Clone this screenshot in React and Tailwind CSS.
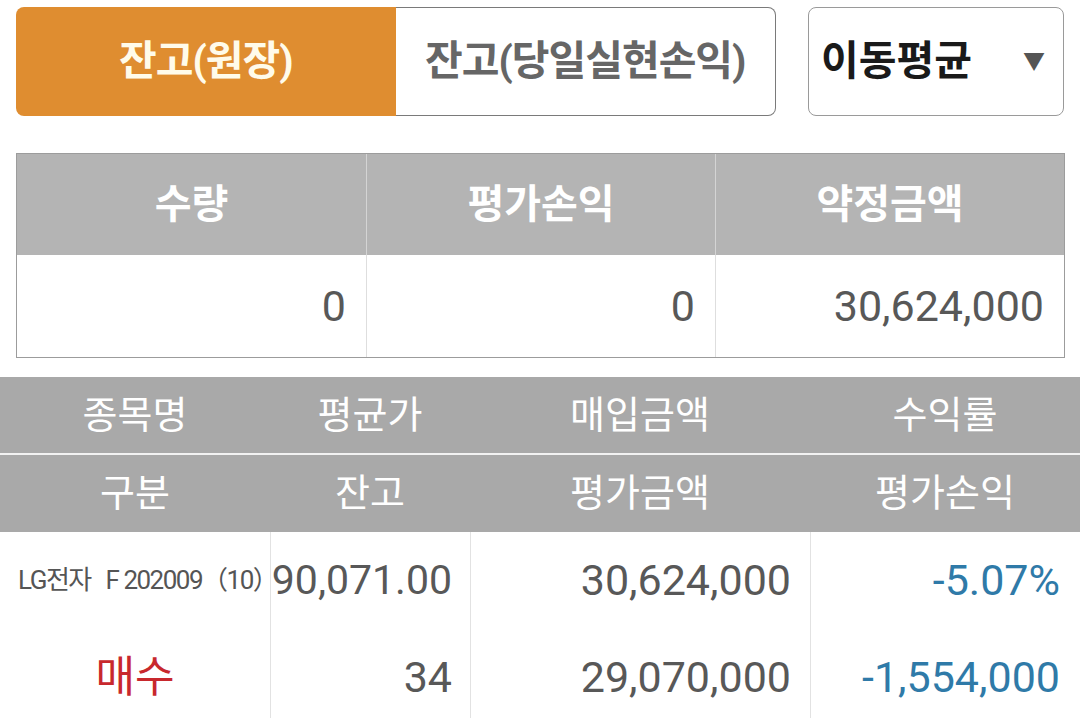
import React from 'react';

const font = { fontFamily: "Roboto, 'Noto Sans CJK KR', sans-serif" };

function Tabs() {
  return (
    <div className="flex items-stretch px-4 pt-[7px]">
      <div className="flex h-[109px] w-[760px]">
        <button className="flex-1 rounded-l-lg bg-[#df8d30] text-[41px] font-bold tracking-[-1px] text-[#fffbea]">
          잔고(원장)
        </button>
        <button className="flex-1 rounded-r-lg border border-l-0 border-[#7a7a7a] bg-white text-[41px] font-bold tracking-[-1px] text-[#666666]">
          잔고(당일실현손익)
        </button>
      </div>
      <div className="ml-8 flex h-[109px] w-[256px] items-center justify-between rounded-lg border border-[#9a9a9a] bg-white pl-[12px] pr-[18px]">
        <span className="text-[41px] font-bold text-[#1a1a1a]">이동평균</span>
        <span className="text-[22px] text-[#555555]">▼</span>
      </div>
    </div>
  );
}

function Summary() {
  const heads = ['수량', '평가손익', '약정금액'];
  const vals = ['0', '0', '30,624,000'];
  return (
    <div className="ml-4 mr-[15px] mt-[37px] border border-[#9c9c9c]">
      <div className="grid h-[101px] grid-cols-3 bg-[#b4b4b4]">
        {heads.map((h, i) => (
          <div
            key={h}
            className={`flex items-center justify-center text-[40px] font-bold text-white ${i > 0 ? 'border-l border-[#d4d4d4]' : ''}`}
          >
            {h}
          </div>
        ))}
      </div>
      <div className="grid h-[102px] grid-cols-3 bg-white">
        {vals.map((v, i) => (
          <div
            key={i}
            className={`flex items-center justify-end pr-5 text-[43px] text-[#585858] ${i > 0 ? 'border-l border-[#dedede]' : ''}`}
          >
            {v}
          </div>
        ))}
      </div>
    </div>
  );
}

const cols = 'grid grid-cols-[270px_200px_340px_270px]';

function Positions() {
  const h1 = ['종목명', '평균가', '매입금액', '수익률'];
  const h2 = ['구분', '잔고', '평가금액', '평가손익'];
  return (
    <div className="mt-[19px]">
      <div className={`${cols} h-[76px] bg-[#a9a9a9]`}>
        {h1.map((h) => (
          <div key={h} className="flex items-center justify-center text-[38px] text-white">
            {h}
          </div>
        ))}
      </div>
      <div className="h-[2px] bg-[#f2f2f2]" />
      <div className={`${cols} h-[77px] bg-[#a9a9a9]`}>
        {h2.map((h) => (
          <div key={h} className="flex items-center justify-center text-[38px] text-white">
            {h}
          </div>
        ))}
      </div>
      <div className={`${cols} bg-white`}>
        <div className="flex h-[97px] items-center whitespace-pre pl-[18px] text-[26px] tracking-[-1.5px] text-[#555555]">
          {'LG전자   F 202009（10）'}
        </div>
        <div className="flex h-[97px] items-center justify-end border-l border-[#e2e2e2] pr-[18px] text-[41px] text-[#585858]">
          90,071.00
        </div>
        <div className="flex h-[97px] items-center justify-end border-l border-[#e2e2e2] pr-[19px] text-[43px] text-[#585858]">
          30,624,000
        </div>
        <div className="flex h-[97px] items-center justify-end border-l border-[#e2e2e2] pr-5 text-[43px] text-[#2f7aa8]">
          -5.07%
        </div>
        <div className="flex h-[97px] items-center justify-center text-[43px] text-[#c8282d]">
          매수
        </div>
        <div className="flex h-[97px] items-center justify-end border-l border-[#e2e2e2] pr-[18px] text-[43px] text-[#585858]">
          34
        </div>
        <div className="flex h-[97px] items-center justify-end border-l border-[#e2e2e2] pr-[19px] text-[43px] text-[#585858]">
          29,070,000
        </div>
        <div className="flex h-[97px] items-center justify-end border-l border-[#e2e2e2] pr-5 text-[43px] text-[#2f7aa8]">
          -1,554,000
        </div>
      </div>
    </div>
  );
}

export default function App() {
  return (
    <div className="min-h-screen w-[1080px] overflow-hidden bg-white" style={font}>
      <Tabs />
      <Summary />
      <Positions />
    </div>
  );
}
